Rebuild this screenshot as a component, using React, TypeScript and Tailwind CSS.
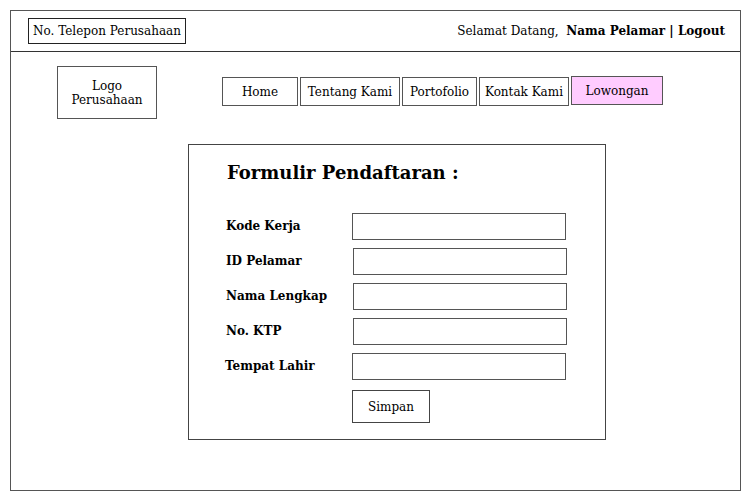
const serif = { fontFamily: '"DejaVu Serif", serif' };

const fields = [
  { label: 'Kode Kerja', shift: false },
  { label: 'ID Pelamar', shift: true },
  { label: 'Nama Lengkap', shift: true },
  { label: 'No. KTP', shift: true },
  { label: 'Tempat Lahir', shift: false },
];

const nav = [
  { t: 'Home', w: 'w-[76px]' },
  { t: 'Tentang Kami', w: 'w-[100px]' },
  { t: 'Portofolio', w: 'w-[75px]' },
  { t: 'Kontak Kami', w: 'w-[90px]' },
];

export default function App() {
  return (
    <div className="h-[500px] w-[751px] bg-white p-[10px] text-black" style={serif}>
      <div className="flex h-[481px] w-[731px] flex-col border-[1.5px] border-[#555]">
        <header className="flex h-[41px] items-center justify-between border-b-[1.5px] border-[#333] pl-[17px] pr-[15px]">
          <div className="flex h-[26px] w-[158px] items-center justify-center border border-[#222] text-[12px]">No. Telepon Perusahaan</div>
          <div className="text-[12px]">
            Selamat Datang,&nbsp; <span className="font-bold">Nama Pelamar | Logout</span>
          </div>
        </header>

        <div className="flex items-start pt-[14px]">
          <div className="ml-[46px] flex h-[53px] w-[100px] flex-col items-center justify-center border-[1.5px] border-[#555] text-[12px] leading-[14px]">
            <span>Logo</span>
            <span>Perusahaan</span>
          </div>
          <nav className="ml-[65px] mt-[11px] flex gap-[2px]">
            {nav.map((n) => (
              <div key={n.t} className={`flex h-[29px] items-center justify-center border-[1.5px] border-[#555] text-[12px] ${n.w}`}>
                {n.t}
              </div>
            ))}
            <div className="-mt-[1px] flex h-[29px] w-[92px] items-start justify-center border-[1.5px] border-[#555] bg-[#ffccff] pt-[5px] text-[12px]">
              Lowongan
            </div>
          </nav>
        </div>

        <div className="ml-[177px] mt-[25px] h-[296px] w-[418px] border-[1.5px] border-[#444]">
          <h1 className="ml-[38px] mt-[15px] text-[18px] font-bold leading-[26px]">Formulir Pendaftaran :</h1>
          <div className="mt-[27px] flex flex-col gap-[9px]">
            {fields.map((f) => (
              <div key={f.label} className="relative flex h-[26px] items-center">
                <span className={`text-[12px] font-bold ${f.label === 'Tempat Lahir' ? 'ml-[36px]' : 'ml-[37px]'}`}>{f.label}</span>
                <div className={`absolute top-0 h-[27px] w-[214px] border-[1.5px] border-[#555] ${f.shift ? 'left-[164px]' : 'left-[163px]'}`} />
              </div>
            ))}
          </div>
          <button className="ml-[163px] mt-[11px] flex h-[33px] w-[78px] items-center justify-center border-[1.5px] border-[#444] text-[12px]">
            Simpan
          </button>
        </div>
      </div>
    </div>
  );
}
